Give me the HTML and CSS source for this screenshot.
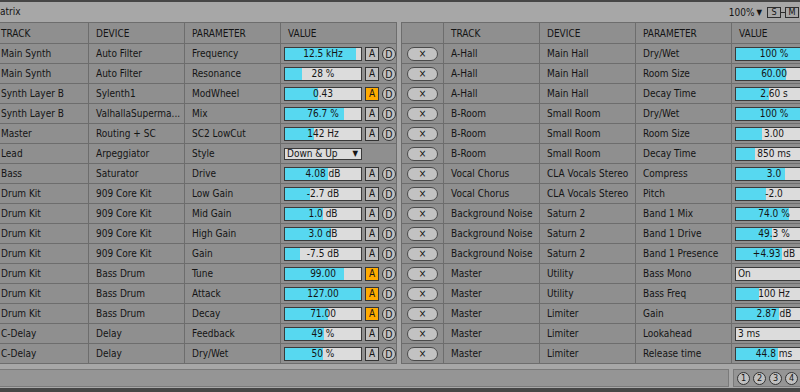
FILE: index.html
```html
<!DOCTYPE html>
<html>
<head>
<meta charset="utf-8">
<link rel="stylesheet" href="styles.css">
</head>
<body>
<div class="topline"></div>
<div class="titlebar">
  <span class="title">atrix</span>
  <div class="viewctl">
    <span class="zoomval">100%</span><span class="tri">▼</span>
    <span class="tbox">S</span><span class="dash"></span><span class="tbox">M</span>
  </div>
</div>
<div class="main">
  <div class="panel left">
    <div class="row head"><div class="c">TRACK</div><div class="c">DEVICE</div><div class="c">PARAMETER</div><div class="c">VALUE</div></div>
    <div class="row"><div class="c">Main Synth</div><div class="c">Auto Filter</div><div class="c">Frequency</div><div class="c v"><div class="slider" style="--v:94%">12.5 kHz</div><span class="abtn">A</span><span class="dbtn">D</span></div></div>
    <div class="row"><div class="c">Main Synth</div><div class="c">Auto Filter</div><div class="c">Resonance</div><div class="c v"><div class="slider" style="--v:23%">28 %</div><span class="abtn">A</span><span class="dbtn">D</span></div></div>
    <div class="row"><div class="c">Synth Layer B</div><div class="c">Sylenth1</div><div class="c">ModWheel</div><div class="c v"><div class="slider" style="--v:43%">0.43</div><span class="abtn on">A</span><span class="dbtn">D</span></div></div>
    <div class="row"><div class="c">Synth Layer B</div><div class="c">ValhallaSuperma...</div><div class="c">Mix</div><div class="c v"><div class="slider" style="--v:77%">76.7 %</div><span class="abtn">A</span><span class="dbtn">D</span></div></div>
    <div class="row"><div class="c">Master</div><div class="c">Routing + SC</div><div class="c">SC2 LowCut</div><div class="c v"><div class="slider" style="--v:38%">142 Hz</div><span class="abtn">A</span><span class="dbtn">D</span></div></div>
    <div class="row"><div class="c">Lead</div><div class="c">Arpeggiator</div><div class="c">Style</div><div class="c v"><div class="dropdown"><span>Down &amp; Up</span><span class="dtri">▼</span></div></div></div>
    <div class="row"><div class="c">Bass</div><div class="c">Saturator</div><div class="c">Drive</div><div class="c v"><div class="slider" style="--v:56%">4.08 dB</div><span class="abtn">A</span><span class="dbtn">D</span></div></div>
    <div class="row"><div class="c">Drum Kit</div><div class="c">909 Core Kit</div><div class="c">Low Gain</div><div class="c v"><div class="slider" style="--v:33%">-2.7 dB</div><span class="abtn">A</span><span class="dbtn">D</span></div></div>
    <div class="row"><div class="c">Drum Kit</div><div class="c">909 Core Kit</div><div class="c">Mid Gain</div><div class="c v"><div class="slider" style="--v:50%">1.0 dB</div><span class="abtn">A</span><span class="dbtn">D</span></div></div>
    <div class="row"><div class="c">Drum Kit</div><div class="c">909 Core Kit</div><div class="c">High Gain</div><div class="c v"><div class="slider" style="--v:60%">3.0 dB</div><span class="abtn">A</span><span class="dbtn">D</span></div></div>
    <div class="row"><div class="c">Drum Kit</div><div class="c">909 Core Kit</div><div class="c">Gain</div><div class="c v"><div class="slider" style="--v:20%">-7.5 dB</div><span class="abtn">A</span><span class="dbtn">D</span></div></div>
    <div class="row"><div class="c">Drum Kit</div><div class="c">Bass Drum</div><div class="c">Tune</div><div class="c v"><div class="slider" style="--v:78%">99.00</div><span class="abtn on">A</span><span class="dbtn">D</span></div></div>
    <div class="row"><div class="c">Drum Kit</div><div class="c">Bass Drum</div><div class="c">Attack</div><div class="c v"><div class="slider" style="--v:100%">127.00</div><span class="abtn on">A</span><span class="dbtn">D</span></div></div>
    <div class="row"><div class="c">Drum Kit</div><div class="c">Bass Drum</div><div class="c">Decay</div><div class="c v"><div class="slider" style="--v:57%">71.00</div><span class="abtn on">A</span><span class="dbtn">D</span></div></div>
    <div class="row"><div class="c">C-Delay</div><div class="c">Delay</div><div class="c">Feedback</div><div class="c v"><div class="slider" style="--v:51%">49 %</div><span class="abtn">A</span><span class="dbtn">D</span></div></div>
    <div class="row"><div class="c">C-Delay</div><div class="c">Delay</div><div class="c">Dry/Wet</div><div class="c v"><div class="slider" style="--v:50%">50 %</div><span class="abtn">A</span><span class="dbtn">D</span></div></div>
  </div>
  <div class="panel right">
    <div class="row head"><div class="c"></div><div class="c">TRACK</div><div class="c">DEVICE</div><div class="c">PARAMETER</div><div class="c">VALUE</div></div>
    <div class="row"><div class="c x"><span class="pill">×</span></div><div class="c">A-Hall</div><div class="c">Main Hall</div><div class="c">Dry/Wet</div><div class="c v"><div class="slider" style="--v:100%">100 %</div></div></div>
    <div class="row"><div class="c x"><span class="pill">×</span></div><div class="c">A-Hall</div><div class="c">Main Hall</div><div class="c">Room Size</div><div class="c v"><div class="slider" style="--v:66%">60.00</div></div></div>
    <div class="row"><div class="c x"><span class="pill">×</span></div><div class="c">A-Hall</div><div class="c">Main Hall</div><div class="c">Decay Time</div><div class="c v"><div class="slider" style="--v:43%">2.60 s</div></div></div>
    <div class="row"><div class="c x"><span class="pill">×</span></div><div class="c">B-Room</div><div class="c">Small Room</div><div class="c">Dry/Wet</div><div class="c v"><div class="slider" style="--v:100%">100 %</div></div></div>
    <div class="row"><div class="c x"><span class="pill">×</span></div><div class="c">B-Room</div><div class="c">Small Room</div><div class="c">Room Size</div><div class="c v"><div class="slider" style="--v:34%">3.00</div></div></div>
    <div class="row"><div class="c x"><span class="pill">×</span></div><div class="c">B-Room</div><div class="c">Small Room</div><div class="c">Decay Time</div><div class="c v"><div class="slider" style="--v:25%">850 ms</div></div></div>
    <div class="row"><div class="c x"><span class="pill">×</span></div><div class="c">Vocal Chorus</div><div class="c">CLA Vocals Stereo</div><div class="c">Compress</div><div class="c v"><div class="slider" style="--v:64%">3.0</div></div></div>
    <div class="row"><div class="c x"><span class="pill">×</span></div><div class="c">Vocal Chorus</div><div class="c">CLA Vocals Stereo</div><div class="c">Pitch</div><div class="c v"><div class="slider" style="--v:39%">-2.0</div></div></div>
    <div class="row"><div class="c x"><span class="pill">×</span></div><div class="c">Background Noise</div><div class="c">Saturn 2</div><div class="c">Band 1 Mix</div><div class="c v"><div class="slider" style="--v:70%">74.0 %</div></div></div>
    <div class="row"><div class="c x"><span class="pill">×</span></div><div class="c">Background Noise</div><div class="c">Saturn 2</div><div class="c">Band 1 Drive</div><div class="c v"><div class="slider" style="--v:47%">49.3 %</div></div></div>
    <div class="row"><div class="c x"><span class="pill">×</span></div><div class="c">Background Noise</div><div class="c">Saturn 2</div><div class="c">Band 1 Presence</div><div class="c v"><div class="slider" style="--v:60%">+4.93 dB</div></div></div>
    <div class="row"><div class="c x"><span class="pill">×</span></div><div class="c">Master</div><div class="c">Utility</div><div class="c">Bass Mono</div><div class="c v"><div class="slider plain">On</div></div></div>
    <div class="row"><div class="c x"><span class="pill">×</span></div><div class="c">Master</div><div class="c">Utility</div><div class="c">Bass Freq</div><div class="c v"><div class="slider" style="--v:30%">100 Hz</div></div></div>
    <div class="row"><div class="c x"><span class="pill">×</span></div><div class="c">Master</div><div class="c">Limiter</div><div class="c">Gain</div><div class="c v"><div class="slider" style="--v:56%">2.87 dB</div></div></div>
    <div class="row"><div class="c x"><span class="pill">×</span></div><div class="c">Master</div><div class="c">Limiter</div><div class="c">Lookahead</div><div class="c v"><div class="slider plain">3 ms</div></div></div>
    <div class="row"><div class="c x"><span class="pill">×</span></div><div class="c">Master</div><div class="c">Limiter</div><div class="c">Release time</div><div class="c v"><div class="slider" style="--v:55%">44.8 ms</div></div></div>
  </div>
</div>
<div class="statusbar">
  <div class="sbox wide"></div>
  <div class="sbox nums"><span class="num">1</span><span class="num">2</span><span class="num">3</span><span class="num">4</span></div>
</div>
<div class="bottomline"></div>
</body>
</html>
```
FILE: styles.css
```css
html, body {
  margin: 0;
  padding: 0;
  width: 800px;
  height: 392px;
  overflow: hidden;
  background: #a7a7a7;
  font-family: "DejaVu Sans Condensed", "DejaVu Sans", sans-serif;
  font-stretch: condensed;
  font-size: 10px;
  color: #141414;
}

.topline { height: 2px; background: #464646; }
.bottomline { height: 4px; background: #464646; margin-top: 1px; }

.titlebar {
  height: 20px;
  display: flex;
  align-items: center;
  justify-content: space-between;
}
.title { line-height: 20px; }
.viewctl { display: flex; align-items: center; padding-right: 1px; }
.zoomval { margin-right: 2px; }
.tri { font-size: 8px; margin-right: 5px; }
.tbox {
  box-sizing: border-box;
  width: 14px;
  height: 11px;
  border: 1px solid #2e2e2e;
  font-size: 9px;
  line-height: 9px;
  text-align: center;
}
.dash { width: 4px; height: 1px; background: #2e2e2e; }

.main {
  display: flex;
  gap: 4px;
  width: 800px;
  height: 342px;
  overflow: hidden;
}
.panel {
  background: #8f8f8f;
  border-top: 1px solid #6d6d6d;
  overflow: hidden;
}
.left { width: 397px; flex: none; }
.right { flex: 1; min-width: 0; border-left: 1px solid #6d6d6d; }

.row {
  display: grid;
  height: 20px;
  box-sizing: border-box;
  border-bottom: 1px solid #6d6d6d;
}
.left .row { grid-template-columns: 89px 96px 96px 116px; }
.right .row { grid-template-columns: 42px 96px 96px 96px 68px; }
.row.head { height: 21px; }

.c {
  box-sizing: border-box;
  border-right: 1px solid #6d6d6d;
  padding-left: 7px;
  display: flex;
  align-items: center;
  white-space: nowrap;
  overflow: hidden;
}
.right .c:last-child { border-right: none; }
.left .c:first-child { padding-left: 1px; }
.c.v { padding-left: 3px; gap: 3px; }
.c.x { padding-left: 5px; }

.slider {
  box-sizing: border-box;
  width: 78px;
  height: 14px;
  border: 1px solid #3a3a3a;
  background: linear-gradient(to right, #57d8f0 var(--v), #dcdcdc var(--v));
  text-align: center;
  line-height: 12px;
  flex: none;
}
.slider.plain {
  background: #dcdcdc;
  text-align: left;
  padding-left: 2px;
}
.dropdown {
  box-sizing: border-box;
  width: 78px;
  height: 12px;
  border: 1px solid #3a3a3a;
  background: #dcdcdc;
  display: flex;
  justify-content: space-between;
  align-items: center;
  padding: 0 3px 0 2px;
  line-height: 10px;
}
.dtri { font-size: 8px; }

.abtn {
  box-sizing: border-box;
  width: 14px;
  height: 14px;
  border: 1px solid #333;
  background: #c0c0c0;
  text-align: center;
  line-height: 12px;
  flex: none;
}
.abtn.on { background: #ffab00; }
.dbtn {
  box-sizing: border-box;
  width: 14px;
  height: 14px;
  border: 1px solid #333;
  border-radius: 50%;
  background: #c0c0c0;
  text-align: center;
  line-height: 12px;
  font-size: 10.5px;
  flex: none;
}

.pill {
  box-sizing: border-box;
  width: 31px;
  height: 14px;
  border: 1px solid #4a4a4a;
  border-radius: 7px;
  background: #c2c2c2;
  text-align: center;
  line-height: 12px;
  font-size: 10px;
}

.statusbar {
  margin-top: 5px;
  height: 18px;
  display: flex;
  gap: 4px;
  overflow: hidden;
}
.sbox {
  box-sizing: border-box;
  height: 18px;
  border: 1px solid #7a7a7a;
  background: #959595;
}
.sbox.wide { width: 729px; border-left: none; flex: none; }
.sbox.nums {
  flex: 1;
  display: flex;
  align-items: center;
  padding-left: 3px;
  gap: 3px;
  border-right: none;
}
.num {
  box-sizing: border-box;
  width: 13px;
  height: 13px;
  border: 1px solid #333;
  border-radius: 50%;
  background: #c0c0c0;
  font-size: 9px;
  line-height: 11px;
  text-align: center;
  flex: none;
}
```
